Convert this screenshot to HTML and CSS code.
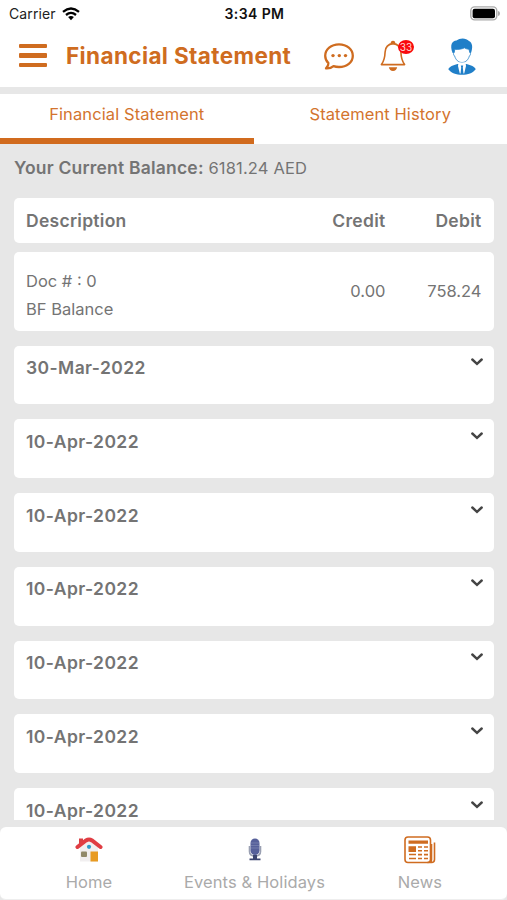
FILE: index.html
```html
<!DOCTYPE html>
<html>
	<head>
		<meta charset="UTF-8">
		<meta name="viewport" content="width=device-width, initial-scale=1">
		<title>Financial Statement</title>
		<link rel="stylesheet" href="styles.css">
	</head>
	<body>
		<div class="app">
			<div class="status">
				<div class="carrier">
					<span>Carrier</span>
					<svg class="wifi" width="18" height="14" viewBox="0 0 18 14"><g fill="none" stroke="#000" stroke-width="2.3"><path d="M1 4.8Q9-1.8 17 4.8"/><path d="M4 8Q9 3.8 14 8"/></g><path d="M6.1 10.1Q9 7.9 11.9 10.1L9 13.3z"/></svg>
				</div>
				<span class="time">3:34 PM</span>
				<svg class="battery" width="30" height="15" viewBox="0 0 30 15"><rect x=".8" y=".9" width="26" height="13" rx="3.8" fill="#fff" stroke="#aaa" stroke-width="1.4"/><rect x="2.6" y="2.7" width="22.4" height="9.5" rx="2"/><path d="M28 5q2 .4 2 2.5T28 10z" fill="#aaa"/></svg>
			</div>

			<header class="header">
				<a href="#" class="menu"><i></i><i></i><i></i></a>
				<h1>Financial Statement</h1>
				<svg class="chat" width="30" height="27" viewBox="0 0 30 27"><path d="M2 25.3C4 23.5 4.6 22 4.4 20.2 2.3 18.2 1.2 15.7 1.2 12.8 1.2 6.2 7.2 1.3 15 1.3s13.8 4.9 13.8 11.5S22.8 24 15 24c-2 0-3.9-.3-5.500-.9C7.5 24.800 5 25.500 2 25.300z" fill="none" stroke="#cf6c20" stroke-width="2.3" stroke-linejoin="round"/><g fill="#cf6c20"><circle cx="9" cy="12.6" r="1.7"/><circle cx="15.3" cy="12.6" r="1.7"/><circle cx="21.5" cy="12.6" r="1.7"/></g></svg>
				<div class="bell">
					<svg width="26" height="32" viewBox="0 0 26 32"><path d="M13 3.6C8.3 4 5.4 7.2 5.1 12c-.2 5.5-.8 8.7-3.700 12.6h23.200C21.7 20.7 21.1 17.5 20.9 12 20.6 7.2 17.7 4 13 3.6z" fill="none" stroke="#cf6c20" stroke-width="1.6" stroke-linejoin="round"/><path d="M10.6 4q0-3.200 2.400-3.200T15.4 4zM8.800 27.300h8.400q-.8 3.700-4.200 3.700t-4.200-3.700z" fill="#cf6c20"/></svg>
					<span class="badge">33</span>
				</div>
				<svg class="avatar" width="36" height="38" viewBox="0 0 36 38"><g fill="#207fc8"><path d="M8.6 16C5.600 8 8 3.800 12.500 3.500 16 .6 22 .6 25 4c3.600 1.800 4 6.500 2 12z"/><path d="M4.300 32.200c1-2.500 4.800-4.200 9.200-5.200h9c4.400 1 8.200 2.700 9.200 5.200-2.900 3.800-7.700 5.600-13.700 5.600S7.200 36 4.300 32.200z"/></g><path d="M10.2 15.500l.6-3.200c4 .3 7-.2 9.700-1.500 1.500 1 3 1.400 4.500 1.500l.8 3.200c1 0 1 2.800-.5 3.600-1 3.700-3.700 6.400-7.300 6.400s-6.300-2.700-7.300-6.400c-1.500-.8-1.500-3.600-.5-3.600z" fill="#fff" stroke="#207fc8" stroke-width=".8"/><path d="M14.500 25.500h7l.5 3.500-1.800 7.500h-4.400L14 29z" fill="#fff"/><path d="M16.800 28.500h2.400l-.4 2 .7 6.500h-3l.7-6.500z" fill="#207fc8"/></svg>
			</header>

			<nav class="tabs">
				<a href="#" class="tab active"><span>Financial Statement</span></a>
				<a href="#" class="tab"><span>Statement History</span></a>
			</nav>

			<main class="content">
				<p class="balance"><b>Your Current Balance:</b> <span>6181.24 AED</span></p>
				<div class="card row head">
					<span class="desc">Description</span>
					<span class="credit">Credit</span>
					<span class="debit">Debit</span>
				</div>
				<div class="card row doc">
					<p class="desc"><span>Doc # : 0</span><br><span>BF Balance</span></p>
					<span class="credit">0.00</span>
					<span class="debit">758.24</span>
				</div>
				<div class="dates">
					<div class="card date"><b>30-Mar-2022</b><svg class="arrow" viewBox="0 0 12 8"><path d="M1.3 1.5L6 5.8l4.7-4.3"/></svg></div>
					<div class="card date"><b>10-Apr-2022</b><svg class="arrow" viewBox="0 0 12 8"><path d="M1.3 1.5L6 5.8l4.7-4.3"/></svg></div>
					<div class="card date"><b>10-Apr-2022</b><svg class="arrow" viewBox="0 0 12 8"><path d="M1.3 1.5L6 5.8l4.7-4.3"/></svg></div>
					<div class="card date"><b>10-Apr-2022</b><svg class="arrow" viewBox="0 0 12 8"><path d="M1.3 1.5L6 5.8l4.7-4.3"/></svg></div>
					<div class="card date"><b>10-Apr-2022</b><svg class="arrow" viewBox="0 0 12 8"><path d="M1.3 1.5L6 5.8l4.7-4.3"/></svg></div>
					<div class="card date"><b>10-Apr-2022</b><svg class="arrow" viewBox="0 0 12 8"><path d="M1.3 1.5L6 5.8l4.7-4.3"/></svg></div>
					<div class="card date"><b>10-Apr-2022</b><svg class="arrow" viewBox="0 0 12 8"><path d="M1.3 1.5L6 5.8l4.7-4.3"/></svg></div>
				</div>
			</main>

			<footer class="footer">
				<a href="#" class="home">
					<svg width="28" height="26" viewBox="0 0 28 26"><path d="M5 10L14 4l9 6v14.500H5z" fill="#f1eff0"/><path d="M4 1.500h4v6H4z" fill="#d93f43"/><path d="M2.500 10L11 3.500q3-2 6 0l8.500 6.500" fill="none" stroke="#e03d43" stroke-width="4" stroke-linecap="round"/><circle cx="14" cy="9.8" r="2.1" fill="#2d9bc9"/><rect x="6" y="14.500" width="6" height="5.500" rx="1" fill="#918969"/><rect x="15.500" y="14.500" width="7.500" height="10" fill="#e89b22"/></svg>
					<span>Home</span>
				</a>
				<a href="#" class="events">
					<svg width="16" height="26" viewBox="0 0 16 26"><path d="M2.500 9v5.500q0 4.500 5.500 4.500t5.500-4.500V9" fill="none" stroke="#9aa0b2" stroke-width="1.6"/><rect x="3.500" y="1.500" width="9" height="16.500" rx="4.500" fill="#56609a"/><path d="M4 6h8M4 8.500h8M4 11h8" stroke="#7983b0" stroke-width=".8"/><path d="M6 18h4v3.500h3.500v1.800h-11v-1.800H6z" fill="#3c4570"/></svg>
					<span>Events &amp; Holidays</span>
				</a>
				<a href="#" class="news">
					<svg width="32" height="28" viewBox="0 0 32 28"><g fill="none" stroke="#cf6c20" stroke-width="1.6"><rect x="1" y="1" width="25.5" height="25.5" rx="3"/><path d="M23.5 26.500h4q3 0 3-3V6.500M27.500 8v15.500q0 3-3 3"/><path d="M5 18.500h7M5 22.500h7M14 11h4M20 11h4M14 14.800h4M20 14.800h4M14 18.600h4M20 18.600h4M14 22.500h4M20 22.500h4"/></g><path d="M4.500 4.500H24v3.300H4.500zM4.500 10.200H12V16H4.500z" fill="#cf6c20"/></svg>
					<span>News</span>
				</a>
			</footer>
		</div>
	</body>
</html>
```
FILE: styles.css
```css
* { margin:0; padding:0; box-sizing:border-box; }
body { background:#e7e7e7; font-family:Inter, "Liberation Sans", sans-serif; color:#747474; }
a { text-decoration:none; color:inherit; }
svg { display:block; flex:none; }
.app { height:900px; display:flex; flex-direction:column; overflow:hidden; }

/* status bar */
.status { height:28px; flex:none; background:#fff; color:#222; display:grid; grid-template-columns:1fr auto 1fr; align-items:center; padding:0 7px 1px 9px; font-size:14px; }
.carrier { display:flex; gap:6px; align-items:center; letter-spacing:.1px; }
.time { font-weight:600; letter-spacing:.4px; color:#111; }
.battery { justify-self:end; }

/* header */
.header { height:59px; flex:none; background:#fff; display:flex; padding-left:19px; }
.menu { width:28px; padding-top:15.500px; display:flex; flex-direction:column; gap:5.500px; }
.menu i { height:4.300px; border-radius:1px; background:#cf6c20; }
.header h1 { width:257px; padding-left:19px; font-size:22.500px; line-height:56px; letter-spacing:.38px; color:#cf6c20; white-space:nowrap; }
.chat { margin:15px 0 0 20px; }
.bell { position:relative; width:34px; margin:12px 0 0 26px; }
.badge { position:absolute; left:18px; top:0; width:16px; height:14px; border-radius:50%; background:#f9090d; color:#ffd5d5; font-size:10px; line-height:14px; text-align:center; }
.avatar { margin:9px 0 0 30px; }

/* tabs */
.tabs { height:50px; flex:none; margin-top:7px; background:#fff; display:flex; color:#d3742e; font-size:16.5px; line-height:40px; letter-spacing:.1px; text-align:center; }
.tab { flex:1; }
.active { border-bottom:6px solid #d16b1e; }

.content { flex:1; min-height:0; padding:0 13.5px 0 14px; overflow:hidden; }
.balance { height:54px; line-height:47px; font-size:16.5px; letter-spacing:.15px; white-space:nowrap; }
.balance b { font-weight:600; font-size:17.5px; letter-spacing:.2px; }
.card { background:#fff; border-radius:5px; }
.row { display:flex; align-items:center; padding:0 12px; }
.head { height:45px; font-size:17.5px; font-weight:600; letter-spacing:.28px; }
.doc { height:79px; margin-top:9px; padding-bottom:2px; font-size:16.5px; }
.doc .desc { line-height:28px; padding-top:8px; }
.desc { flex:1; }
.debit { width:96px; text-align:right; }

.dates { display:flex; flex-direction:column; gap:15px; margin-top:14.5px; }
.date { height:58.75px; flex:none; display:flex; justify-content:space-between; padding:11.500px 11px 0 12px; font-size:17.5px; line-height:22px; letter-spacing:.42px; }
.date b { font-weight:600; }
.arrow { width:12px; height:8px; margin-top:1px; fill:none; stroke:#444; stroke-width:2.4; stroke-linecap:round; }

/* bottom menu */
.footer { height:73px; flex:none; margin-top:7px; background:#fff; border-radius:6px; border-bottom:1px solid #eee; display:grid; grid-template-columns:178px 153px 1fr; color:#aaa; font-size:16.5px; letter-spacing:.1px; }
.footer a { display:flex; flex-direction:column; align-items:center; white-space:nowrap; }
.footer .news { padding-left:2px; }
.footer svg { height:28px; margin-top:9px; }
.footer span { line-height:20px; margin-top:8px; }
```
